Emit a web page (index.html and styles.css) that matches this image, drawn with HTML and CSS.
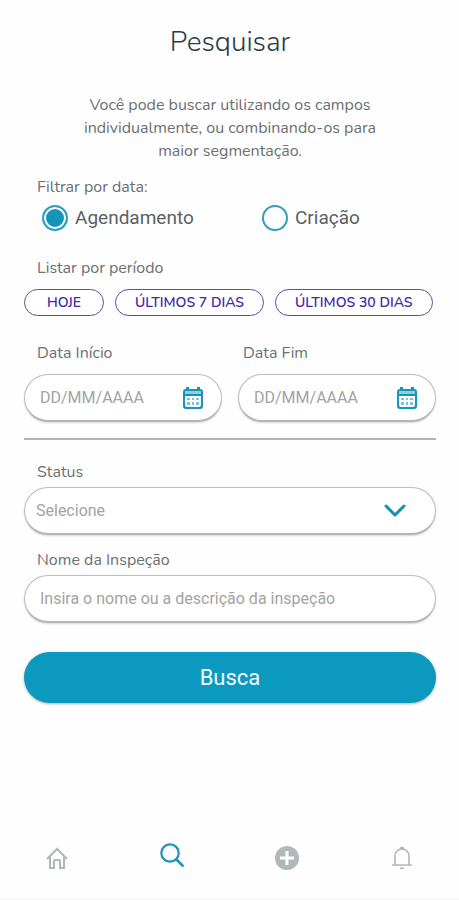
FILE: index.html
```html
<!DOCTYPE html>
<html lang="pt-BR">
  <head>
    <meta charset="UTF-8" />
    <meta name="viewport" content="width=device-width, initial-scale=1.0" />
    <title>Pesquisar</title>
    <link rel="stylesheet" href="styles.css">
  </head>
  <body>
    <main class="page">
      <h1 class="title">Pesquisar</h1>
      <p class="intro">
        Você pode buscar utilizando os campos individualmente, ou combinando-os para maior segmentação.
      </p>

      <form class="search-form">
        <!-- DATE FILTER -->
        <fieldset class="group">
          <legend class="label">Filtrar por data:</legend>
          <div class="radios">
            <label class="radio"><input type="radio" name="tipo" value="agendamento" checked />Agendamento</label>
            <label class="radio"><input type="radio" name="tipo" value="criacao" />Criação</label>
          </div>
        </fieldset>

        <!-- PERIOD -->
        <fieldset class="group period">
          <legend class="label">Listar por período</legend>
          <div class="chips">
            <button type="button" class="chip">HOJE</button>
            <button type="button" class="chip">ÚLTIMOS 7 DIAS</button>
            <button type="button" class="chip">ÚLTIMOS 30 DIAS</button>
          </div>
        </fieldset>

        <div class="dates">
          <div class="group">
            <label class="label" for="inicio">Data Início</label>
            <div class="field">
              <input type="text" id="inicio" placeholder="DD/MM/AAAA" />
              <button type="button" class="icon-button" aria-label="Abrir calendário de início">
                <svg width="20" height="22" viewBox="0 0 20 22">
                  <path d="M3 0h3v2h8V0h3v2a3 3 0 0 1 3 3v14a3 3 0 0 1-3 3H3a3 3 0 0 1-3-3V5a3 3 0 0 1 3-3z" fill="#1795b9" />
                  <path d="M2 4h16v3H2z" fill="#8fcddf" />
                  <path d="M2 9h16v9a2 2 0 0 1-2 2H4a2 2 0 0 1-2-2z" fill="#fff" />
                  <path d="M4 11h3v2H4zM9 11h2v2H9zM13 11h3v2h-3zM4 15h3v3H4zM9 15h2v3H9zM13 15h3v3h-3z" fill="#7cc3d8" />
                </svg>
              </button>
            </div>
          </div>
          <div class="group">
            <label class="label label-end" for="fim">Data Fim</label>
            <div class="field">
              <input type="text" id="fim" placeholder="DD/MM/AAAA" />
              <button type="button" class="icon-button" aria-label="Abrir calendário de fim">
                <svg width="20" height="22" viewBox="0 0 20 22">
                  <path d="M3 0h3v2h8V0h3v2a3 3 0 0 1 3 3v14a3 3 0 0 1-3 3H3a3 3 0 0 1-3-3V5a3 3 0 0 1 3-3z" fill="#1795b9" />
                  <path d="M2 4h16v3H2z" fill="#8fcddf" />
                  <path d="M2 9h16v9a2 2 0 0 1-2 2H4a2 2 0 0 1-2-2z" fill="#fff" />
                  <path d="M4 11h3v2H4zM9 11h2v2H9zM13 11h3v2h-3zM4 15h3v3H4zM9 15h2v3H9zM13 15h3v3h-3z" fill="#7cc3d8" />
                </svg>
              </button>
            </div>
          </div>
        </div>

        <hr class="divider" />

        <div class="group details">
          <label class="label" for="status">Status</label>
          <div class="field select-field">
            <select id="status">
              <option>Selecione</option>
            </select>
            <svg class="arrow" width="22" height="14" viewBox="0 0 22 14">
              <path d="M2 2l9 9 9-9" fill="none" stroke="#1291b5" stroke-width="3" stroke-linecap="round" stroke-linejoin="round" />
            </svg>
          </div>
        </div>

        <div class="group details">
          <label class="label" for="nome">Nome da Inspeção</label>
          <div class="field">
            <input type="text" id="nome" placeholder="Insira o nome ou a descrição da inspeção" />
          </div>
        </div>

        <button type="submit" class="submit">Busca</button>
      </form>
    </main>

    <!-- BOTTOM NAV -->
    <nav class="navbar">
      <a href="#inicio" aria-label="Início">
        <svg width="24" height="24" viewBox="0 0 24 24" fill="none" stroke="#b1b6b7" stroke-width="2">
          <path d="M2 13L12 3l10 10M5 11v11h4v-7q0-1 1-1h4q1 0 1 1v7h4V11" />
        </svg>
      </a>
      <a href="#pesquisar" class="active" aria-label="Pesquisar">
        <svg width="24" height="24" viewBox="0 0 24 24" fill="none" stroke="#1d94b7">
          <circle cx="10" cy="10" r="8.7" stroke-width="2.2" />
          <path d="M16 16l7.5 7.5" stroke-width="2.6" />
        </svg>
      </a>
      <a href="#nova" aria-label="Adicionar">
        <svg width="24" height="24" viewBox="0 0 24 24">
          <circle cx="12" cy="12" r="12" fill="#b1b8ba" />
          <path d="M12 5v14M5 12h14" stroke="#fff" stroke-width="3" />
        </svg>
      </a>
      <a href="#avisos" aria-label="Notificações">
        <svg width="24" height="24" viewBox="0 0 24 24" fill="none" stroke="#b1b6b7">
          <path d="M2 19h20M5 19v-9a7 7 0 0 1 14 0v9" stroke-width="1.6" />
          <path d="M10 3q0-2 2-2t2 2z M10 22h4l-2 1z" fill="#b1b6b7" />
        </svg>
      </a>
    </nav>
  </body>
</html>
```

FILE: styles.css
```css
* {
  box-sizing: border-box;
  margin: 0;
  padding: 0;
}

body {
  display: flex;
  flex-direction: column;
  min-height: 100vh;
  background-color: #fefefe;
  border-bottom: 2px solid #f7f7f7;
  font-family: Nunito, "Noto Sans", sans-serif;
  color: #6b7071;
}

.page {
  flex: 1;
  padding: 22px 23px 0 24px;
}

.title {
  font-size: 28px;
  font-weight: 300;
  line-height: 40px;
  text-align: center;
  color: #263e44;
}

.intro {
  max-width: 310px;
  margin: 32px auto 0;
  font-size: 16px;
  line-height: 23px;
  text-align: center;
}

.search-form {
  display: flex;
  flex-direction: column;
  margin-top: 14px;
}

.group {
  min-width: 0;
  border: none;
}

.label {
  display: block;
  padding-left: 13px;
  font-size: 16px;
  line-height: 20px;
}

.label-end {
  padding-left: 5px;
}

/* RADIOS */
.radios {
  display: grid;
  grid-template-columns: 220px 1fr;
  padding: 8px 0 0 18px;
}

.radio {
  display: flex;
  align-items: center;
  gap: 7px;
  font-family: Roboto, sans-serif;
  font-size: 19px;
  line-height: 26px;
  color: #5b6162;
}

.radio input {
  appearance: none;
  width: 26px;
  height: 26px;
  border: 2px solid #2d9fbf;
  border-radius: 50%;
  background-color: #fff;
}

.radio input:checked {
  background-color: #1295b9;
  box-shadow: inset 0 0 0 2px #fff;
}

/* CHIPS */
.period {
  margin-top: 27px;
}

.chips {
  display: flex;
  gap: 11px;
  padding-top: 11px;
}

.chip {
  min-width: 80px;
  height: 27px;
  padding: 0 19px;
  border: 1px solid #5b4bab;
  border-radius: 14px;
  background-color: #fff;
  font-family: inherit;
  font-size: 14px;
  font-weight: 600;
  white-space: nowrap;
  color: #4429a5;
}

/* FIELDS */
.dates {
  display: grid;
  grid-template-columns: 1fr 1fr;
  gap: 16px;
  margin-top: 27px;
}

.field {
  display: flex;
  align-items: center;
  height: 48px;
  margin-top: 11px;
  border: 1px solid #bdbdbd;
  border-bottom: 2px solid #b4b4b4;
  border-radius: 24px;
  background-color: #fff;
  box-shadow: 0 1px 2px rgba(0, 0, 0, 0.15);
}

.field input {
  flex: 1;
  min-width: 0;
  height: 100%;
  padding-left: 15px;
  border: none;
  outline: none;
  background: none;
  font-family: Roboto, sans-serif;
  font-size: 16px;
  color: #636869;
}

.field input::placeholder {
  color: #a3a3a3;
}

.icon-button {
  display: flex;
  margin-right: 18px;
  border: none;
  background: none;
  cursor: pointer;
}

.divider {
  height: 2px;
  margin-top: 16px;
  border: none;
  background-color: #b0b3b3;
}

.divider + .details {
  margin-top: 22px;
}

.details {
  margin-top: 15px;
}

.details .field {
  margin-top: 5px;
}

.select-field {
  display: grid;
}

.select-field select,
.arrow {
  grid-area: 1 / 1;
}

.select-field select {
  appearance: none;
  height: 100%;
  padding-left: 11px;
  border: none;
  outline: none;
  background: none;
  font-family: Roboto, sans-serif;
  font-size: 16px;
  color: #a3a3a3;
}

.arrow {
  justify-self: end;
  margin-right: 29px;
  pointer-events: none;
}

.submit {
  height: 51px;
  margin-top: 29px;
  border: none;
  border-radius: 26px;
  background-color: #0c99c0;
  box-shadow: 0 1px 3px rgba(0, 0, 0, 0.3);
  font-family: Roboto, sans-serif;
  font-size: 22px;
  color: #f4fbfd;
  cursor: pointer;
}

/* NAV */
.navbar {
  display: grid;
  grid-template-columns: repeat(4, 1fr);
  align-items: end;
  justify-items: center;
  padding-bottom: 28px;
}

.navbar a {
  display: flex;
}

.navbar .active {
  padding-bottom: 3px;
}
```
